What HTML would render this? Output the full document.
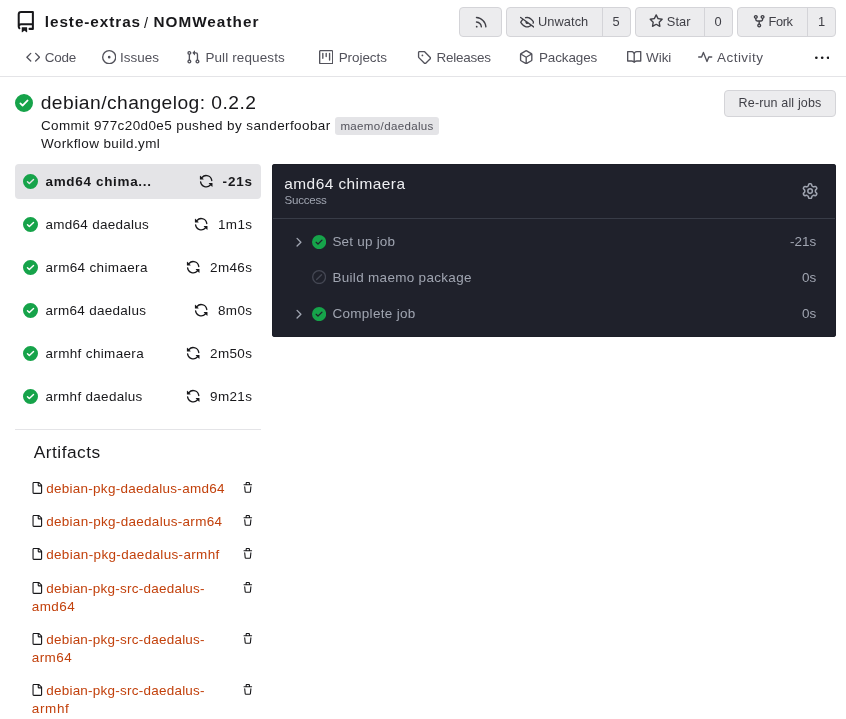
<!DOCTYPE html>
<html><head><meta charset="utf-8"><style>
html,body{margin:0;padding:0;background:#fff;width:846px;height:719px;overflow:hidden;position:relative}
#w{position:absolute;left:0;top:0;width:846px;height:719px;will-change:transform}
body{font-family:"Liberation Sans",sans-serif}
.t{position:absolute;white-space:pre}
.r{position:absolute}
.i{position:absolute}
</style></head><body><div id="w">
<svg class="i" style="left:15.1px;top:11px;width:21.6px;height:21.6px" viewBox="0 0 16 16" fill="#18181b"><path d="M2 2.5A2.5 2.5 0 0 1 4.5 0h8.75a.75.75 0 0 1 .75.75v12.5a.75.75 0 0 1-.75.75h-2.5a.75.75 0 0 1 0-1.5h1.75v-2h-8a1 1 0 0 0-.714 1.7.75.75 0 1 1-1.072 1.05A2.495 2.495 0 0 1 2 11.5Zm10.5-1h-8a1 1 0 0 0-1 1v6.708A2.486 2.486 0 0 1 4.5 9h8ZM5 12.25a.25.25 0 0 1 .25-.25h3.5a.25.25 0 0 1 .25.25v3.25a.25.25 0 0 1-.4.2l-1.45-1.087a.249.249 0 0 0-.3 0L5.4 15.7a.25.25 0 0 1-.4-.2Z"/></svg>
<div class="t" style="left:44.80px;top:13.00px;font-size:15.3px;line-height:17px;letter-spacing:0.932px;color:#18181b;font-weight:700;">leste-extras</div>
<div class="t" style="left:143.90px;top:15.00px;font-size:14.55px;line-height:16px;letter-spacing:0.000px;color:#18181b;">/</div>
<div class="t" style="left:153.40px;top:13.00px;font-size:15.3px;line-height:17px;letter-spacing:1.025px;color:#18181b;font-weight:700;">NOMWeather</div>
<div class="r" style="left:459px;top:7px;width:41px;height:28px;background:#ececee;border:1px solid #d4d4d8;border-radius:4px;"></div>
<svg class="i" style="left:474.3px;top:14.6px;width:14.4px;height:14.4px" viewBox="0 0 16 16" fill="#3f3f46"><path d="M2.002 2.725a.75.75 0 0 1 .797-.699C8.79 2.42 13.58 7.21 13.974 13.201a.75.75 0 0 1-1.497.098 10.502 10.502 0 0 0-9.776-9.776.747.747 0 0 1-.7-.798ZM2.84 7.05h-.002a7.002 7.002 0 0 1 6.113 6.111.75.75 0 0 1-1.49.178 5.503 5.503 0 0 0-4.8-4.8.75.75 0 0 1 .179-1.489ZM2 13a1 1 0 1 1 2 0 1 1 0 0 1-2 0Z"/></svg>
<div class="r" style="left:506px;top:7px;width:123px;height:28px;background:#ececee;border:1px solid #d4d4d8;border-radius:4px;"></div>
<div class="r" style="left:602px;top:7px;width:1px;height:30px;background:#d4d4d8;"></div>
<svg class="i" style="left:519.8px;top:14.6px;width:14.4px;height:14.4px" viewBox="0 0 16 16" fill="#3f3f46"><path d="M.143 2.31a.75.75 0 0 1 1.047-.167l14.5 10.5a.75.75 0 1 1-.88 1.214l-2.248-1.628C11.346 13.19 9.792 14 8 14c-1.981 0-3.67-.992-4.933-2.078C1.797 10.832.88 9.577.43 8.9a1.619 1.619 0 0 1 0-1.797c.353-.533.995-1.42 1.868-2.305L.31 3.357A.75.75 0 0 1 .143 2.31Zm1.536 5.622A.12.12 0 0 0 1.657 8c0 .021.006.045.022.068.412.621 1.242 1.75 2.366 2.717C5.175 11.758 6.527 12.5 8 12.5c1.195 0 2.31-.488 3.29-1.191L9.063 9.695A2 2 0 0 1 6.058 7.52L3.529 5.688a14.207 14.207 0 0 0-1.85 2.244ZM8 3.5c-.516 0-1.017.09-1.499.251a.75.75 0 1 1-.473-1.423A6.207 6.207 0 0 1 8 2c1.981 0 3.67.992 4.933 2.078 1.27 1.091 2.187 2.345 2.637 3.023a1.62 1.62 0 0 1 0 1.798c-.11.166-.248.365-.41.587a.75.75 0 1 1-1.21-.887c.148-.201.272-.382.371-.53a.119.119 0 0 0 0-.137c-.412-.621-1.242-1.75-2.366-2.717C10.825 4.242 9.473 3.5 8 3.5Z"/></svg>
<div class="t" style="left:538.00px;top:14.00px;font-size:12.84px;line-height:15px;letter-spacing:0.057px;color:#3f3f46;">Unwatch</div>
<div class="t" style="left:612.60px;top:14.00px;font-size:12.84px;line-height:15px;letter-spacing:0.000px;color:#3f3f46;">5</div>
<div class="r" style="left:635px;top:7px;width:96px;height:28px;background:#ececee;border:1px solid #d4d4d8;border-radius:4px;"></div>
<div class="r" style="left:704px;top:7px;width:1px;height:30px;background:#d4d4d8;"></div>
<svg class="i" style="left:648.6px;top:14.2px;width:14.4px;height:14.4px" viewBox="0 0 16 16" fill="#3f3f46"><path d="M8 .25a.75.75 0 0 1 .673.418l1.882 3.815 4.21.612a.75.75 0 0 1 .416 1.279l-3.046 2.97.719 4.192a.751.751 0 0 1-1.088.791L8 12.347l-3.766 1.98a.75.75 0 0 1-1.088-.79l.72-4.194L.818 6.374a.75.75 0 0 1 .416-1.28l4.21-.611L7.327.668A.75.75 0 0 1 8 .25Zm0 2.445L6.615 5.5a.75.75 0 0 1-.564.41l-3.097.45 2.24 2.184a.75.75 0 0 1 .216.664l-.528 3.084 2.769-1.456a.75.75 0 0 1 .698 0l2.77 1.456-.53-3.084a.75.75 0 0 1 .216-.664l2.24-2.183-3.096-.45a.75.75 0 0 1-.564-.41L8 2.694Z"/></svg>
<div class="t" style="left:666.80px;top:14.00px;font-size:12.84px;line-height:15px;letter-spacing:0.050px;color:#3f3f46;">Star</div>
<div class="t" style="left:714.40px;top:14.00px;font-size:12.84px;line-height:15px;letter-spacing:0.000px;color:#3f3f46;">0</div>
<div class="r" style="left:737px;top:7px;width:97px;height:28px;background:#ececee;border:1px solid #d4d4d8;border-radius:4px;"></div>
<div class="r" style="left:807px;top:7px;width:1px;height:30px;background:#d4d4d8;"></div>
<svg class="i" style="left:751.6px;top:14.3px;width:14.4px;height:14.4px" viewBox="0 0 16 16" fill="#3f3f46"><path d="M5 5.372v.878c0 .414.336.75.75.75h4.5a.75.75 0 0 0 .75-.75v-.878a2.25 2.25 0 1 1 1.5 0v.878a2.25 2.25 0 0 1-2.25 2.25h-1.5v2.128a2.251 2.251 0 1 1-1.5 0V8.5h-1.5A2.25 2.25 0 0 1 3.5 6.25v-.878a2.25 2.25 0 1 1 1.5 0ZM5 3.25a.75.75 0 1 0-1.5 0 .75.75 0 0 0 1.5 0Zm6.75.75a.75.75 0 1 0 0-1.5.75.75 0 0 0 0 1.5Zm-3 8.75a.75.75 0 1 0-1.5 0 .75.75 0 0 0 1.5 0Z"/></svg>
<div class="t" style="left:768.50px;top:14.00px;font-size:12.84px;line-height:15px;letter-spacing:-0.402px;color:#3f3f46;">Fork</div>
<div class="t" style="left:818.00px;top:14.00px;font-size:12.84px;line-height:15px;letter-spacing:0.000px;color:#3f3f46;">1</div>
<svg class="i" style="left:25.8px;top:49.5px;width:14.4px;height:14.4px" viewBox="0 0 16 16" fill="#52525b"><path d="m11.28 3.22 4.25 4.25a.75.75 0 0 1 0 1.06l-4.25 4.25a.749.749 0 0 1-1.275-.326.749.749 0 0 1 .215-.734L13.94 8l-3.72-3.72a.749.749 0 0 1 .326-1.275.749.749 0 0 1 .734.215Zm-6.56 0a.751.751 0 0 1 1.042.018.751.751 0 0 1 .018 1.042L2.06 8l3.72 3.72a.749.749 0 0 1-.326 1.275.749.749 0 0 1-.734-.215L.47 8.53a.75.75 0 0 1 0-1.06Z"/></svg>
<div class="t" style="left:44.80px;top:50.00px;font-size:13.48px;line-height:15px;letter-spacing:-0.244px;color:#52525b;">Code</div>
<svg class="i" style="left:101.8px;top:49.5px;width:14.4px;height:14.4px" viewBox="0 0 16 16" fill="#52525b"><path d="M8 9.5a1.5 1.5 0 1 0 0-3 1.5 1.5 0 0 0 0 3ZM8 0a8 8 0 1 1 0 16A8 8 0 0 1 8 0ZM1.5 8a6.5 6.5 0 1 0 13 0 6.5 6.5 0 0 0-13 0Z"/></svg>
<div class="t" style="left:120.00px;top:50.00px;font-size:13.48px;line-height:15px;letter-spacing:0.009px;color:#52525b;">Issues</div>
<svg class="i" style="left:185.6px;top:49.5px;width:14.4px;height:14.4px" viewBox="0 0 16 16" fill="#52525b"><path d="M1.5 3.25a2.25 2.25 0 1 1 3 2.122v5.256a2.251 2.251 0 1 1-1.5 0V5.372A2.25 2.25 0 0 1 1.5 3.25Zm5.677-.177L9.573.677A.25.25 0 0 1 10 .854V2.5h1A2.5 2.5 0 0 1 13.5 5v5.628a2.251 2.251 0 1 1-1.5 0V5a1 1 0 0 0-1-1h-1v1.646a.25.25 0 0 1-.427.177L7.177 3.427a.25.25 0 0 1 0-.354ZM3.75 2.5a.75.75 0 1 0 0 1.5.75.75 0 0 0 0-1.5Zm0 9.5a.75.75 0 1 0 0 1.5.75.75 0 0 0 0-1.5Zm8.25.75a.75.75 0 1 0 1.5 0 .75.75 0 0 0-1.5 0Z"/></svg>
<div class="t" style="left:205.40px;top:50.00px;font-size:13.48px;line-height:15px;letter-spacing:0.123px;color:#52525b;">Pull requests</div>
<svg class="i" style="left:318.9px;top:49.5px;width:14.4px;height:14.4px" viewBox="0 0 16 16" fill="#52525b"><path d="M1.75 0h12.5C15.216 0 16 .784 16 1.75v12.5A1.75 1.75 0 0 1 14.25 16H1.75A1.75 1.75 0 0 1 0 14.25V1.75C0 .784.784 0 1.75 0ZM1.5 1.75v12.5c0 .138.112.25.25.25h12.5a.25.25 0 0 0 .25-.25V1.75a.25.25 0 0 0-.25-.25H1.75a.25.25 0 0 0-.25.25ZM11.75 3a.75.75 0 0 1 .75.75v7.5a.75.75 0 0 1-1.5 0v-7.5a.75.75 0 0 1 .75-.75Zm-8.25.75a.75.75 0 0 1 1.5 0v5.5a.75.75 0 0 1-1.5 0ZM8 3a.75.75 0 0 1 .75.75v3.5a.75.75 0 0 1-1.5 0v-3.5A.75.75 0 0 1 8 3Z"/></svg>
<div class="t" style="left:338.70px;top:50.00px;font-size:13.48px;line-height:15px;letter-spacing:-0.056px;color:#52525b;">Projects</div>
<svg class="i" style="left:416.6px;top:49.5px;width:14.4px;height:14.4px" viewBox="0 0 16 16" fill="#52525b"><path d="M1 7.775V2.75C1 1.784 1.784 1 2.75 1h5.025c.464 0 .91.184 1.238.513l6.25 6.25a1.75 1.75 0 0 1 0 2.474l-5.026 5.026a1.75 1.75 0 0 1-2.474 0l-6.25-6.25A1.752 1.752 0 0 1 1 7.775Zm1.5 0c0 .066.026.13.073.177l6.25 6.25a.25.25 0 0 0 .354 0l5.025-5.025a.25.25 0 0 0 0-.354l-6.25-6.25a.25.25 0 0 0-.177-.073H2.75a.25.25 0 0 0-.25.25ZM6 5a1 1 0 1 1 0 2 1 1 0 0 1 0-2Z"/></svg>
<div class="t" style="left:436.40px;top:50.00px;font-size:13.48px;line-height:15px;letter-spacing:-0.228px;color:#52525b;">Releases</div>
<svg class="i" style="left:519.1px;top:49.5px;width:14.4px;height:14.4px" viewBox="0 0 16 16" fill="#52525b"><path d="m8.878.392 5.25 3.045c.54.314.872.89.872 1.514v6.098a1.75 1.75 0 0 1-.872 1.514l-5.25 3.045a1.75 1.75 0 0 1-1.756 0l-5.25-3.045A1.75 1.75 0 0 1 1 11.049V4.951c0-.624.332-1.201.872-1.514L7.122.392a1.75 1.75 0 0 1 1.756 0ZM7.875 1.69l-4.63 2.685L8 7.133l4.755-2.758-4.63-2.685a.248.248 0 0 0-.25 0ZM2.5 5.677v5.372c0 .09.047.171.125.216l4.625 2.683V8.432Zm6.25 8.271 4.625-2.683a.25.25 0 0 0 .125-.216V5.677L8.75 8.432Z"/></svg>
<div class="t" style="left:539.00px;top:50.00px;font-size:13.48px;line-height:15px;letter-spacing:-0.115px;color:#52525b;">Packages</div>
<svg class="i" style="left:627.2px;top:49.5px;width:14.4px;height:14.4px" viewBox="0 0 16 16" fill="#52525b"><path d="M0 1.75A.75.75 0 0 1 .75 1h4.253c1.227 0 2.317.59 3 1.501A3.743 3.743 0 0 1 11.006 1h4.245a.75.75 0 0 1 .75.75v10.5a.75.75 0 0 1-.75.75h-4.507a2.25 2.25 0 0 0-1.591.659l-.622.621a.75.75 0 0 1-1.06 0l-.622-.621A2.25 2.25 0 0 0 5.258 13H.75a.75.75 0 0 1-.75-.75Zm7.251 10.324.004-5.073-.002-2.253A2.25 2.25 0 0 0 5.003 2.5H1.5v9h3.757a3.75 3.75 0 0 1 1.994.574ZM8.755 4.75l-.004 7.322a3.752 3.752 0 0 1 1.992-.572H14.5v-9h-3.495a2.25 2.25 0 0 0-2.25 2.25Z"/></svg>
<div class="t" style="left:646.10px;top:50.00px;font-size:13.48px;line-height:15px;letter-spacing:-0.083px;color:#52525b;">Wiki</div>
<svg class="i" style="left:698.4px;top:49.5px;width:14.4px;height:14.4px" viewBox="0 0 16 16" fill="#52525b"><path d="M6 2c.306 0 .582.187.696.471L10 10.731l1.304-3.26A.751.751 0 0 1 12 7h3.25a.75.75 0 0 1 0 1.5h-2.742l-1.812 4.528a.751.751 0 0 1-1.392 0L6 4.77 4.696 8.03A.75.75 0 0 1 4 8.5H.75a.75.75 0 0 1 0-1.5h2.742l1.812-4.529A.751.751 0 0 1 6 2Z"/></svg>
<div class="t" style="left:717.00px;top:50.00px;font-size:13.48px;line-height:15px;letter-spacing:0.473px;color:#52525b;">Activity</div>
<svg class="i" style="left:814.6px;top:50.5px;width:14.4px;height:14.4px" viewBox="0 0 16 16" fill="#18181b"><path d="M8 9a1.5 1.5 0 1 0 0-3 1.5 1.5 0 0 0 0 3ZM1.5 9a1.5 1.5 0 1 0 0-3 1.5 1.5 0 0 0 0 3Zm13 0a1.5 1.5 0 1 0 0-3 1.5 1.5 0 0 0 0 3Z"/></svg>
<div class="r" style="left:0px;top:76px;width:846px;height:1px;background:#e4e4e7;"></div>
<svg class="i" style="left:15px;top:93.7px;width:18px;height:18px" viewBox="0 0 16 16" fill="#16a34a"><path d="M8 16A8 8 0 1 1 8 0a8 8 0 0 1 0 16Zm3.78-9.72a.751.751 0 0 0-.018-1.042.751.751 0 0 0-1.042-.018L6.75 9.19 5.28 7.72a.751.751 0 0 0-1.042.018.751.751 0 0 0-.018 1.042l2 2a.75.75 0 0 0 1.06 0Z"/></svg>
<div class="t" style="left:40.70px;top:92.00px;font-size:19.26px;line-height:21px;letter-spacing:0.440px;color:#18181b;">debian/changelog: 0.2.2</div>
<div class="t" style="left:40.90px;top:118.00px;font-size:13.48px;line-height:15px;letter-spacing:0.410px;color:#18181b;">Commit 977c20d0e5 pushed by sanderfoobar</div>
<div class="r" style="left:335px;top:117px;width:104px;height:18px;background:#e4e4e7;border-radius:3px;"></div>
<div class="t" style="left:340.40px;top:120.00px;font-size:11.56px;line-height:12px;letter-spacing:0.340px;color:#52525b;">maemo/daedalus</div>
<div class="t" style="left:40.90px;top:136.00px;font-size:13.48px;line-height:15px;letter-spacing:0.405px;color:#18181b;">Workflow build.yml</div>
<div class="r" style="left:724px;top:90px;width:110px;height:25px;background:#ececee;border:1px solid #d4d4d8;border-radius:4px;"></div>
<div class="t" style="left:738.60px;top:96.00px;font-size:12.52px;line-height:14px;letter-spacing:0.142px;color:#3f3f46;">Re-run all jobs</div>
<div class="r" style="left:15px;top:164px;width:246px;height:35px;background:#e4e4e7;border-radius:4px;"></div>
<svg class="i" style="left:23.3px;top:173.6px;width:15px;height:15px" viewBox="0 0 16 16" fill="#16a34a"><path d="M8 16A8 8 0 1 1 8 0a8 8 0 0 1 0 16Zm3.78-9.72a.751.751 0 0 0-.018-1.042.751.751 0 0 0-1.042-.018L6.75 9.19 5.28 7.72a.751.751 0 0 0-1.042.018.751.751 0 0 0-.018 1.042l2 2a.75.75 0 0 0 1.06 0Z"/></svg>
<div class="t" style="left:45.50px;top:173.80px;font-size:13.48px;line-height:15px;letter-spacing:0.681px;color:#18181b;font-weight:700;">amd64 chima...</div>
<svg class="i" style="left:199.2px;top:173.8px;width:14.4px;height:14.4px" viewBox="0 0 16 16" fill="#18181b"><path d="M1.705 8.005a.75.75 0 0 1 .834.656 5.5 5.5 0 0 0 9.592 2.97l-1.204-1.204a.25.25 0 0 1 .177-.427h3.646a.25.25 0 0 1 .25.25v3.646a.25.25 0 0 1-.427.177l-1.38-1.38A7.002 7.002 0 0 1 1.05 8.84a.75.75 0 0 1 .656-.834ZM8 2.5a5.487 5.487 0 0 0-4.131 1.869l1.204 1.204A.25.25 0 0 1 4.896 6H1.25A.25.25 0 0 1 1 5.75V2.104a.25.25 0 0 1 .427-.177l1.38 1.38A7.002 7.002 0 0 1 14.95 7.16a.75.75 0 0 1-1.49.178A5.5 5.5 0 0 0 8 2.5Z"/></svg>
<div class="t" style="left:222.60px;top:173.80px;font-size:13.48px;line-height:15px;letter-spacing:0.809px;color:#18181b;font-weight:700;">-21s</div>
<svg class="i" style="left:23.3px;top:216.6px;width:15px;height:15px" viewBox="0 0 16 16" fill="#16a34a"><path d="M8 16A8 8 0 1 1 8 0a8 8 0 0 1 0 16Zm3.78-9.72a.751.751 0 0 0-.018-1.042.751.751 0 0 0-1.042-.018L6.75 9.19 5.28 7.72a.751.751 0 0 0-1.042.018.751.751 0 0 0-.018 1.042l2 2a.75.75 0 0 0 1.06 0Z"/></svg>
<div class="t" style="left:45.50px;top:216.80px;font-size:13.48px;line-height:15px;letter-spacing:0.286px;color:#18181b;">amd64 daedalus</div>
<svg class="i" style="left:193.7px;top:216.8px;width:14.4px;height:14.4px" viewBox="0 0 16 16" fill="#18181b"><path d="M1.705 8.005a.75.75 0 0 1 .834.656 5.5 5.5 0 0 0 9.592 2.97l-1.204-1.204a.25.25 0 0 1 .177-.427h3.646a.25.25 0 0 1 .25.25v3.646a.25.25 0 0 1-.427.177l-1.38-1.38A7.002 7.002 0 0 1 1.05 8.84a.75.75 0 0 1 .656-.834ZM8 2.5a5.487 5.487 0 0 0-4.131 1.869l1.204 1.204A.25.25 0 0 1 4.896 6H1.25A.25.25 0 0 1 1 5.75V2.104a.25.25 0 0 1 .427-.177l1.38 1.38A7.002 7.002 0 0 1 14.95 7.16a.75.75 0 0 1-1.49.178A5.5 5.5 0 0 0 8 2.5Z"/></svg>
<div class="t" style="left:218.00px;top:216.80px;font-size:13.48px;line-height:15px;letter-spacing:0.347px;color:#18181b;">1m1s</div>
<svg class="i" style="left:23.3px;top:259.6px;width:15px;height:15px" viewBox="0 0 16 16" fill="#16a34a"><path d="M8 16A8 8 0 1 1 8 0a8 8 0 0 1 0 16Zm3.78-9.72a.751.751 0 0 0-.018-1.042.751.751 0 0 0-1.042-.018L6.75 9.19 5.28 7.72a.751.751 0 0 0-1.042.018.751.751 0 0 0-.018 1.042l2 2a.75.75 0 0 0 1.06 0Z"/></svg>
<div class="t" style="left:45.50px;top:259.80px;font-size:13.48px;line-height:15px;letter-spacing:0.353px;color:#18181b;">arm64 chimaera</div>
<svg class="i" style="left:186.2px;top:259.8px;width:14.4px;height:14.4px" viewBox="0 0 16 16" fill="#18181b"><path d="M1.705 8.005a.75.75 0 0 1 .834.656 5.5 5.5 0 0 0 9.592 2.97l-1.204-1.204a.25.25 0 0 1 .177-.427h3.646a.25.25 0 0 1 .25.25v3.646a.25.25 0 0 1-.427.177l-1.38-1.38A7.002 7.002 0 0 1 1.05 8.84a.75.75 0 0 1 .656-.834ZM8 2.5a5.487 5.487 0 0 0-4.131 1.869l1.204 1.204A.25.25 0 0 1 4.896 6H1.25A.25.25 0 0 1 1 5.75V2.104a.25.25 0 0 1 .427-.177l1.38 1.38A7.002 7.002 0 0 1 14.95 7.16a.75.75 0 0 1-1.49.178A5.5 5.5 0 0 0 8 2.5Z"/></svg>
<div class="t" style="left:210.00px;top:259.80px;font-size:13.48px;line-height:15px;letter-spacing:0.387px;color:#18181b;">2m46s</div>
<svg class="i" style="left:23.3px;top:302.6px;width:15px;height:15px" viewBox="0 0 16 16" fill="#16a34a"><path d="M8 16A8 8 0 1 1 8 0a8 8 0 0 1 0 16Zm3.78-9.72a.751.751 0 0 0-.018-1.042.751.751 0 0 0-1.042-.018L6.75 9.19 5.28 7.72a.751.751 0 0 0-1.042.018.751.751 0 0 0-.018 1.042l2 2a.75.75 0 0 0 1.06 0Z"/></svg>
<div class="t" style="left:45.50px;top:302.80px;font-size:13.48px;line-height:15px;letter-spacing:0.295px;color:#18181b;">arm64 daedalus</div>
<svg class="i" style="left:193.7px;top:302.8px;width:14.4px;height:14.4px" viewBox="0 0 16 16" fill="#18181b"><path d="M1.705 8.005a.75.75 0 0 1 .834.656 5.5 5.5 0 0 0 9.592 2.97l-1.204-1.204a.25.25 0 0 1 .177-.427h3.646a.25.25 0 0 1 .25.25v3.646a.25.25 0 0 1-.427.177l-1.38-1.38A7.002 7.002 0 0 1 1.05 8.84a.75.75 0 0 1 .656-.834ZM8 2.5a5.487 5.487 0 0 0-4.131 1.869l1.204 1.204A.25.25 0 0 1 4.896 6H1.25A.25.25 0 0 1 1 5.75V2.104a.25.25 0 0 1 .427-.177l1.38 1.38A7.002 7.002 0 0 1 14.95 7.16a.75.75 0 0 1-1.49.178A5.5 5.5 0 0 0 8 2.5Z"/></svg>
<div class="t" style="left:218.00px;top:302.80px;font-size:13.48px;line-height:15px;letter-spacing:0.347px;color:#18181b;">8m0s</div>
<svg class="i" style="left:23.3px;top:345.6px;width:15px;height:15px" viewBox="0 0 16 16" fill="#16a34a"><path d="M8 16A8 8 0 1 1 8 0a8 8 0 0 1 0 16Zm3.78-9.72a.751.751 0 0 0-.018-1.042.751.751 0 0 0-1.042-.018L6.75 9.19 5.28 7.72a.751.751 0 0 0-1.042.018.751.751 0 0 0-.018 1.042l2 2a.75.75 0 0 0 1.06 0Z"/></svg>
<div class="t" style="left:45.50px;top:345.80px;font-size:13.48px;line-height:15px;letter-spacing:0.357px;color:#18181b;">armhf chimaera</div>
<svg class="i" style="left:186.2px;top:345.8px;width:14.4px;height:14.4px" viewBox="0 0 16 16" fill="#18181b"><path d="M1.705 8.005a.75.75 0 0 1 .834.656 5.5 5.5 0 0 0 9.592 2.97l-1.204-1.204a.25.25 0 0 1 .177-.427h3.646a.25.25 0 0 1 .25.25v3.646a.25.25 0 0 1-.427.177l-1.38-1.38A7.002 7.002 0 0 1 1.05 8.84a.75.75 0 0 1 .656-.834ZM8 2.5a5.487 5.487 0 0 0-4.131 1.869l1.204 1.204A.25.25 0 0 1 4.896 6H1.25A.25.25 0 0 1 1 5.75V2.104a.25.25 0 0 1 .427-.177l1.38 1.38A7.002 7.002 0 0 1 14.95 7.16a.75.75 0 0 1-1.49.178A5.5 5.5 0 0 0 8 2.5Z"/></svg>
<div class="t" style="left:210.00px;top:345.80px;font-size:13.48px;line-height:15px;letter-spacing:0.387px;color:#18181b;">2m50s</div>
<svg class="i" style="left:23.3px;top:388.6px;width:15px;height:15px" viewBox="0 0 16 16" fill="#16a34a"><path d="M8 16A8 8 0 1 1 8 0a8 8 0 0 1 0 16Zm3.78-9.72a.751.751 0 0 0-.018-1.042.751.751 0 0 0-1.042-.018L6.75 9.19 5.28 7.72a.751.751 0 0 0-1.042.018.751.751 0 0 0-.018 1.042l2 2a.75.75 0 0 0 1.06 0Z"/></svg>
<div class="t" style="left:45.50px;top:388.80px;font-size:13.48px;line-height:15px;letter-spacing:0.306px;color:#18181b;">armhf daedalus</div>
<svg class="i" style="left:186.2px;top:388.8px;width:14.4px;height:14.4px" viewBox="0 0 16 16" fill="#18181b"><path d="M1.705 8.005a.75.75 0 0 1 .834.656 5.5 5.5 0 0 0 9.592 2.97l-1.204-1.204a.25.25 0 0 1 .177-.427h3.646a.25.25 0 0 1 .25.25v3.646a.25.25 0 0 1-.427.177l-1.38-1.38A7.002 7.002 0 0 1 1.05 8.84a.75.75 0 0 1 .656-.834ZM8 2.5a5.487 5.487 0 0 0-4.131 1.869l1.204 1.204A.25.25 0 0 1 4.896 6H1.25A.25.25 0 0 1 1 5.75V2.104a.25.25 0 0 1 .427-.177l1.38 1.38A7.002 7.002 0 0 1 14.95 7.16a.75.75 0 0 1-1.49.178A5.5 5.5 0 0 0 8 2.5Z"/></svg>
<div class="t" style="left:210.00px;top:388.80px;font-size:13.48px;line-height:15px;letter-spacing:0.387px;color:#18181b;">9m21s</div>
<div class="r" style="left:15px;top:429px;width:246px;height:1px;background:#e4e4e7;"></div>
<div class="r" style="left:272px;top:164px;width:564px;height:173px;background:#1f212b;border-radius:3px;box-shadow:inset 0 0 0 1px #1c1e27;"></div>
<div class="t" style="left:284.30px;top:175.00px;font-size:15.41px;line-height:17px;letter-spacing:0.455px;color:#eeeff2;">amd64 chimaera</div>
<div class="t" style="left:284.60px;top:194.20px;font-size:11.56px;line-height:12px;letter-spacing:-0.248px;color:#a0a5b1;">Success</div>
<svg class="i" style="left:801.5px;top:182.7px;width:16.2px;height:16.2px" viewBox="0 0 16 16" fill="#a0a5b1"><path d="M8 0a8.2 8.2 0 0 1 .701.031C9.444.095 9.99.645 10.16 1.29l.288 1.107c.018.066.079.158.212.224.231.114.454.243.668.386.123.082.233.09.299.071l1.103-.303c.644-.176 1.392.021 1.82.63.27.385.506.792.704 1.218.315.675.111 1.422-.364 1.891l-.814.806c-.049.048-.098.147-.088.294.016.257.016.515 0 .772-.01.147.038.246.088.294l.814.806c.475.469.679 1.216.364 1.891a7.977 7.977 0 0 1-.704 1.217c-.428.61-1.176.807-1.82.63l-1.102-.302c-.067-.019-.177-.011-.3.071a5.909 5.909 0 0 1-.668.386c-.133.066-.194.158-.211.224l-.29 1.106c-.168.646-.715 1.196-1.458 1.26a8.006 8.006 0 0 1-1.402 0c-.743-.064-1.289-.614-1.458-1.26l-.289-1.106c-.018-.066-.079-.158-.212-.224a5.738 5.738 0 0 1-.668-.386c-.123-.082-.233-.09-.299-.071l-1.103.303c-.644.176-1.392-.021-1.82-.63a8.12 8.12 0 0 1-.704-1.218c-.315-.675-.111-1.422.363-1.891l.815-.806c.05-.048.098-.147.088-.294a6.214 6.214 0 0 1 0-.772c.01-.147-.038-.246-.088-.294l-.815-.806C.635 6.045.431 5.298.746 4.623a7.92 7.92 0 0 1 .704-1.217c.428-.61 1.176-.807 1.82-.63l1.102.302c.067.019.177.011.3-.071.214-.143.437-.272.668-.386.133-.066.194-.158.211-.224l.29-1.106C6.009.645 6.556.095 7.299.03 7.53.01 7.764 0 8 0Zm-.571 1.525c-.036.003-.108.036-.137.146l-.289 1.105c-.147.561-.549.967-.998 1.189-.173.086-.34.183-.5.29-.417.278-.97.423-1.529.27l-1.103-.303c-.109-.03-.175.016-.195.045-.22.312-.412.644-.573.99-.014.031-.021.11.059.19l.815.806c.411.406.562.957.53 1.456a4.709 4.709 0 0 0 0 .582c.032.499-.119 1.05-.53 1.456l-.815.806c-.081.08-.073.159-.059.19.162.346.353.677.573.989.02.03.085.076.195.046l1.102-.303c.56-.153 1.113-.008 1.53.27.161.107.328.204.501.29.447.222.85.629.997 1.189l.289 1.105c.029.109.101.143.137.146a6.6 6.6 0 0 0 1.142 0c.036-.003.108-.036.137-.146l.289-1.105c.147-.561.549-.967.998-1.189.173-.086.34-.183.5-.29.417-.278.97-.423 1.529-.27l1.103.303c.109.029.175-.016.195-.045.22-.313.411-.644.573-.99.014-.031.021-.11-.059-.19l-.815-.806c-.411-.406-.562-.957-.53-1.456a4.709 4.709 0 0 0 0-.582c-.032-.499.119-1.05.53-1.456l.815-.806c.081-.08.073-.159.059-.19a6.464 6.464 0 0 0-.573-.989c-.02-.03-.085-.076-.195-.046l-1.102.303c-.56.153-1.113.008-1.53-.27a4.44 4.440 0 0 0-.501-.29c-.447-.222-.85-.629-.997-1.189l-.289-1.105c-.029-.11-.101-.143-.137-.146a6.6 6.6 0 0 0-1.142 0ZM11 8a3 3 0 1 1-6 0 3 3 0 0 1 6 0ZM9.5 8a1.5 1.5 0 1 0-3.001.001A1.5 1.5 0 0 0 9.5 8Z"/></svg>
<div class="r" style="left:273px;top:218px;width:562px;height:1px;background:#383c47;"></div>
<svg class="i" style="left:291.2px;top:234.5px;width:14.4px;height:14.4px" viewBox="0 0 16 16" fill="#a0a5b1"><path d="M6.22 3.22a.75.75 0 0 1 1.06 0l4.25 4.25a.75.75 0 0 1 0 1.06l-4.25 4.25a.751.751 0 0 1-1.042-.018.751.751 0 0 1-.018-1.042L9.94 8 6.22 4.28a.75.75 0 0 1 0-1.06Z"/></svg>
<svg class="i" style="left:312px;top:235px;width:14.2px;height:14.2px" viewBox="0 0 16 16" fill="#16a34a"><path d="M8 16A8 8 0 1 1 8 0a8 8 0 0 1 0 16Zm3.78-9.72a.751.751 0 0 0-.018-1.042.751.751 0 0 0-1.042-.018L6.75 9.19 5.28 7.72a.751.751 0 0 0-1.042.018.751.751 0 0 0-.018 1.042l2 2a.75.75 0 0 0 1.06 0Z"/></svg>
<div class="t" style="left:332.40px;top:234.30px;font-size:13.48px;line-height:15px;letter-spacing:0.222px;color:#a0a5b1;">Set up job</div>
<div class="t" style="right:29.8px;top:234.3px;font-size:13.48px;line-height:15px;color:#a0a5b1">-21s</div>
<svg class="i" style="left:312px;top:270px;width:14.2px;height:14.2px" viewBox="0 0 16 16" fill="#444753"><path d="M8 0a8 8 0 1 1 0 16A8 8 0 0 1 8 0ZM1.5 8a6.5 6.5 0 1 0 13 0 6.5 6.5 0 0 0-13 0Zm9.78-2.220-5.500 5.500a.749.749 0 0 1-1.275-.326.749.749 0 0 1 .215-.734l5.500-5.500a.751.751 0 0 1 1.042.018.751.751 0 0 1 .018 1.042Z"/></svg>
<div class="t" style="left:332.40px;top:270.30px;font-size:13.48px;line-height:15px;letter-spacing:0.323px;color:#a0a5b1;">Build maemo package</div>
<div class="t" style="right:29.8px;top:270.3px;font-size:13.48px;line-height:15px;color:#a0a5b1">0s</div>
<svg class="i" style="left:291.2px;top:306.5px;width:14.4px;height:14.4px" viewBox="0 0 16 16" fill="#a0a5b1"><path d="M6.22 3.22a.75.75 0 0 1 1.06 0l4.25 4.25a.75.75 0 0 1 0 1.06l-4.25 4.25a.751.751 0 0 1-1.042-.018.751.751 0 0 1-.018-1.042L9.94 8 6.22 4.28a.75.75 0 0 1 0-1.06Z"/></svg>
<svg class="i" style="left:312px;top:307px;width:14.2px;height:14.2px" viewBox="0 0 16 16" fill="#16a34a"><path d="M8 16A8 8 0 1 1 8 0a8 8 0 0 1 0 16Zm3.78-9.72a.751.751 0 0 0-.018-1.042.751.751 0 0 0-1.042-.018L6.75 9.19 5.28 7.72a.751.751 0 0 0-1.042.018.751.751 0 0 0-.018 1.042l2 2a.75.75 0 0 0 1.06 0Z"/></svg>
<div class="t" style="left:332.40px;top:306.30px;font-size:13.48px;line-height:15px;letter-spacing:0.325px;color:#a0a5b1;">Complete job</div>
<div class="t" style="right:29.8px;top:306.3px;font-size:13.48px;line-height:15px;color:#a0a5b1">0s</div>
<div class="t" style="left:33.70px;top:442.30px;font-size:17.33px;line-height:20px;letter-spacing:0.488px;color:#18181b;">Artifacts</div>
<svg class="i" style="left:30.9px;top:482.0px;width:11.9px;height:11.9px" viewBox="0 0 16 16" fill="#18181b"><path d="M2 1.75C2 .784 2.784 0 3.75 0h6.586c.464 0 .909.184 1.237.513l2.914 2.914c.329.328.513.773.513 1.237v9.586A1.75 1.75 0 0 1 13.25 16h-9.5A1.75 1.75 0 0 1 2 14.25Zm1.75-.25a.25.25 0 0 0-.25.25v12.5c0 .138.112.25.25.25h9.5a.25.25 0 0 0 .25-.25V6h-2.75A1.75 1.75 0 0 1 9 4.25V1.5Zm6.75.062V4.250c0 .138.112.25.25.25h2.688l-.011-.013-2.914-2.914-.013-.011Z"/></svg>
<div class="t" style="left:46.20px;top:480.80px;font-size:13.48px;line-height:15px;letter-spacing:0.283px;color:#c2410c;">debian-pkg-daedalus-amd64</div>
<svg class="i" style="left:241.65px;top:482.1px;width:11.6px;height:11.6px" viewBox="0 0 16 16" fill="#18181b"><path d="M11 1.75V3h2.25a.75.75 0 0 1 0 1.5H2.75a.75.75 0 0 1 0-1.5H5V1.75C5 .784 5.784 0 6.75 0h2.5C10.216 0 11 .784 11 1.75ZM4.496 6.675l.66 6.6a.25.25 0 0 0 .249.225h5.19a.25.25 0 0 0 .249-.225l.66-6.6a.75.75 0 0 1 1.492.149l-.66 6.6A1.748 1.748 0 0 1 10.595 15h-5.19a1.75 1.75 0 0 1-1.741-1.575l-.66-6.6a.75.75 0 1 1 1.492-.15ZM6.5 1.75V3h3V1.75a.25.25 0 0 0-.25-.25h-2.5a.25.25 0 0 0-.25.25Z"/></svg>
<svg class="i" style="left:30.9px;top:515.0px;width:11.9px;height:11.9px" viewBox="0 0 16 16" fill="#18181b"><path d="M2 1.75C2 .784 2.784 0 3.75 0h6.586c.464 0 .909.184 1.237.513l2.914 2.914c.329.328.513.773.513 1.237v9.586A1.75 1.75 0 0 1 13.25 16h-9.5A1.75 1.75 0 0 1 2 14.25Zm1.75-.25a.25.25 0 0 0-.25.25v12.5c0 .138.112.25.25.25h9.5a.25.25 0 0 0 .25-.25V6h-2.75A1.75 1.75 0 0 1 9 4.25V1.5Zm6.75.062V4.250c0 .138.112.25.25.25h2.688l-.011-.013-2.914-2.914-.013-.011Z"/></svg>
<div class="t" style="left:46.20px;top:513.80px;font-size:13.48px;line-height:15px;letter-spacing:0.304px;color:#c2410c;">debian-pkg-daedalus-arm64</div>
<svg class="i" style="left:241.65px;top:515.0999999999999px;width:11.6px;height:11.6px" viewBox="0 0 16 16" fill="#18181b"><path d="M11 1.75V3h2.25a.75.75 0 0 1 0 1.5H2.75a.75.75 0 0 1 0-1.5H5V1.75C5 .784 5.784 0 6.75 0h2.5C10.216 0 11 .784 11 1.75ZM4.496 6.675l.66 6.6a.25.25 0 0 0 .249.225h5.19a.25.25 0 0 0 .249-.225l.66-6.6a.75.75 0 0 1 1.492.149l-.66 6.6A1.748 1.748 0 0 1 10.595 15h-5.19a1.75 1.75 0 0 1-1.741-1.575l-.66-6.6a.75.75 0 1 1 1.492-.15ZM6.5 1.75V3h3V1.75a.25.25 0 0 0-.25-.25h-2.5a.25.25 0 0 0-.25.25Z"/></svg>
<svg class="i" style="left:30.9px;top:547.8000000000001px;width:11.9px;height:11.9px" viewBox="0 0 16 16" fill="#18181b"><path d="M2 1.75C2 .784 2.784 0 3.75 0h6.586c.464 0 .909.184 1.237.513l2.914 2.914c.329.328.513.773.513 1.237v9.586A1.75 1.75 0 0 1 13.25 16h-9.5A1.75 1.75 0 0 1 2 14.25Zm1.75-.25a.25.25 0 0 0-.25.25v12.5c0 .138.112.25.25.25h9.5a.25.25 0 0 0 .25-.25V6h-2.75A1.75 1.75 0 0 1 9 4.25V1.5Zm6.75.062V4.250c0 .138.112.25.25.25h2.688l-.011-.013-2.914-2.914-.013-.011Z"/></svg>
<div class="t" style="left:46.20px;top:546.60px;font-size:13.48px;line-height:15px;letter-spacing:0.346px;color:#c2410c;">debian-pkg-daedalus-armhf</div>
<svg class="i" style="left:241.65px;top:547.9px;width:11.6px;height:11.6px" viewBox="0 0 16 16" fill="#18181b"><path d="M11 1.75V3h2.25a.75.75 0 0 1 0 1.5H2.75a.75.75 0 0 1 0-1.5H5V1.75C5 .784 5.784 0 6.75 0h2.5C10.216 0 11 .784 11 1.75ZM4.496 6.675l.66 6.6a.25.25 0 0 0 .249.225h5.19a.25.25 0 0 0 .249-.225l.66-6.6a.75.75 0 0 1 1.492.149l-.66 6.6A1.748 1.748 0 0 1 10.595 15h-5.19a1.75 1.75 0 0 1-1.741-1.575l-.66-6.6a.75.75 0 1 1 1.492-.15ZM6.5 1.75V3h3V1.75a.25.25 0 0 0-.25-.25h-2.5a.25.25 0 0 0-.25.25Z"/></svg>
<svg class="i" style="left:30.9px;top:582.0px;width:11.9px;height:11.9px" viewBox="0 0 16 16" fill="#18181b"><path d="M2 1.75C2 .784 2.784 0 3.75 0h6.586c.464 0 .909.184 1.237.513l2.914 2.914c.329.328.513.773.513 1.237v9.586A1.75 1.75 0 0 1 13.25 16h-9.5A1.75 1.75 0 0 1 2 14.25Zm1.75-.25a.25.25 0 0 0-.25.25v12.5c0 .138.112.25.25.25h9.5a.25.25 0 0 0 .25-.25V6h-2.75A1.75 1.75 0 0 1 9 4.25V1.5Zm6.75.062V4.250c0 .138.112.25.25.25h2.688l-.011-.013-2.914-2.914-.013-.011Z"/></svg>
<div class="t" style="left:46.20px;top:580.80px;font-size:13.48px;line-height:15px;letter-spacing:0.246px;color:#c2410c;">debian-pkg-src-daedalus-</div>
<div class="t" style="left:31.80px;top:599.00px;font-size:13.48px;line-height:15px;letter-spacing:0.420px;color:#c2410c;">amd64</div>
<svg class="i" style="left:241.65px;top:582.0999999999999px;width:11.6px;height:11.6px" viewBox="0 0 16 16" fill="#18181b"><path d="M11 1.75V3h2.25a.75.75 0 0 1 0 1.5H2.75a.75.75 0 0 1 0-1.5H5V1.75C5 .784 5.784 0 6.75 0h2.5C10.216 0 11 .784 11 1.75ZM4.496 6.675l.66 6.6a.25.25 0 0 0 .249.225h5.19a.25.25 0 0 0 .249-.225l.66-6.6a.75.75 0 0 1 1.492.149l-.66 6.6A1.748 1.748 0 0 1 10.595 15h-5.19a1.75 1.75 0 0 1-1.741-1.575l-.66-6.6a.75.75 0 1 1 1.492-.15ZM6.5 1.75V3h3V1.75a.25.25 0 0 0-.25-.25h-2.5a.25.25 0 0 0-.25.25Z"/></svg>
<svg class="i" style="left:30.9px;top:632.8000000000001px;width:11.9px;height:11.9px" viewBox="0 0 16 16" fill="#18181b"><path d="M2 1.75C2 .784 2.784 0 3.75 0h6.586c.464 0 .909.184 1.237.513l2.914 2.914c.329.328.513.773.513 1.237v9.586A1.75 1.75 0 0 1 13.25 16h-9.5A1.75 1.75 0 0 1 2 14.25Zm1.75-.25a.25.25 0 0 0-.25.25v12.5c0 .138.112.25.25.25h9.5a.25.25 0 0 0 .25-.25V6h-2.75A1.75 1.75 0 0 1 9 4.25V1.5Zm6.75.062V4.250c0 .138.112.25.25.25h2.688l-.011-.013-2.914-2.914-.013-.011Z"/></svg>
<div class="t" style="left:46.20px;top:631.60px;font-size:13.48px;line-height:15px;letter-spacing:0.246px;color:#c2410c;">debian-pkg-src-daedalus-</div>
<div class="t" style="left:31.80px;top:649.80px;font-size:13.48px;line-height:15px;letter-spacing:0.421px;color:#c2410c;">arm64</div>
<svg class="i" style="left:241.65px;top:632.9px;width:11.6px;height:11.6px" viewBox="0 0 16 16" fill="#18181b"><path d="M11 1.75V3h2.25a.75.75 0 0 1 0 1.5H2.75a.75.75 0 0 1 0-1.5H5V1.75C5 .784 5.784 0 6.75 0h2.5C10.216 0 11 .784 11 1.75ZM4.496 6.675l.66 6.6a.25.25 0 0 0 .249.225h5.19a.25.25 0 0 0 .249-.225l.66-6.6a.75.75 0 0 1 1.492.149l-.66 6.6A1.748 1.748 0 0 1 10.595 15h-5.19a1.75 1.75 0 0 1-1.741-1.575l-.66-6.6a.75.75 0 1 1 1.492-.15ZM6.5 1.75V3h3V1.75a.25.25 0 0 0-.25-.25h-2.5a.25.25 0 0 0-.25.25Z"/></svg>
<svg class="i" style="left:30.9px;top:683.8000000000001px;width:11.9px;height:11.9px" viewBox="0 0 16 16" fill="#18181b"><path d="M2 1.75C2 .784 2.784 0 3.75 0h6.586c.464 0 .909.184 1.237.513l2.914 2.914c.329.328.513.773.513 1.237v9.586A1.75 1.75 0 0 1 13.25 16h-9.5A1.75 1.75 0 0 1 2 14.25Zm1.75-.25a.25.25 0 0 0-.25.25v12.5c0 .138.112.25.25.25h9.5a.25.25 0 0 0 .25-.25V6h-2.75A1.75 1.75 0 0 1 9 4.25V1.5Zm6.75.062V4.250c0 .138.112.25.25.25h2.688l-.011-.013-2.914-2.914-.013-.011Z"/></svg>
<div class="t" style="left:46.20px;top:682.60px;font-size:13.48px;line-height:15px;letter-spacing:0.246px;color:#c2410c;">debian-pkg-src-daedalus-</div>
<div class="t" style="left:31.80px;top:700.80px;font-size:13.48px;line-height:15px;letter-spacing:0.630px;color:#c2410c;">armhf</div>
<svg class="i" style="left:241.65px;top:683.9px;width:11.6px;height:11.6px" viewBox="0 0 16 16" fill="#18181b"><path d="M11 1.75V3h2.25a.75.75 0 0 1 0 1.5H2.75a.75.75 0 0 1 0-1.5H5V1.75C5 .784 5.784 0 6.75 0h2.5C10.216 0 11 .784 11 1.75ZM4.496 6.675l.66 6.6a.25.25 0 0 0 .249.225h5.19a.25.25 0 0 0 .249-.225l.66-6.6a.75.75 0 0 1 1.492.149l-.66 6.6A1.748 1.748 0 0 1 10.595 15h-5.19a1.75 1.75 0 0 1-1.741-1.575l-.66-6.6a.75.75 0 1 1 1.492-.15ZM6.5 1.75V3h3V1.75a.25.25 0 0 0-.25-.25h-2.5a.25.25 0 0 0-.25.25Z"/></svg>
</div></body></html>
